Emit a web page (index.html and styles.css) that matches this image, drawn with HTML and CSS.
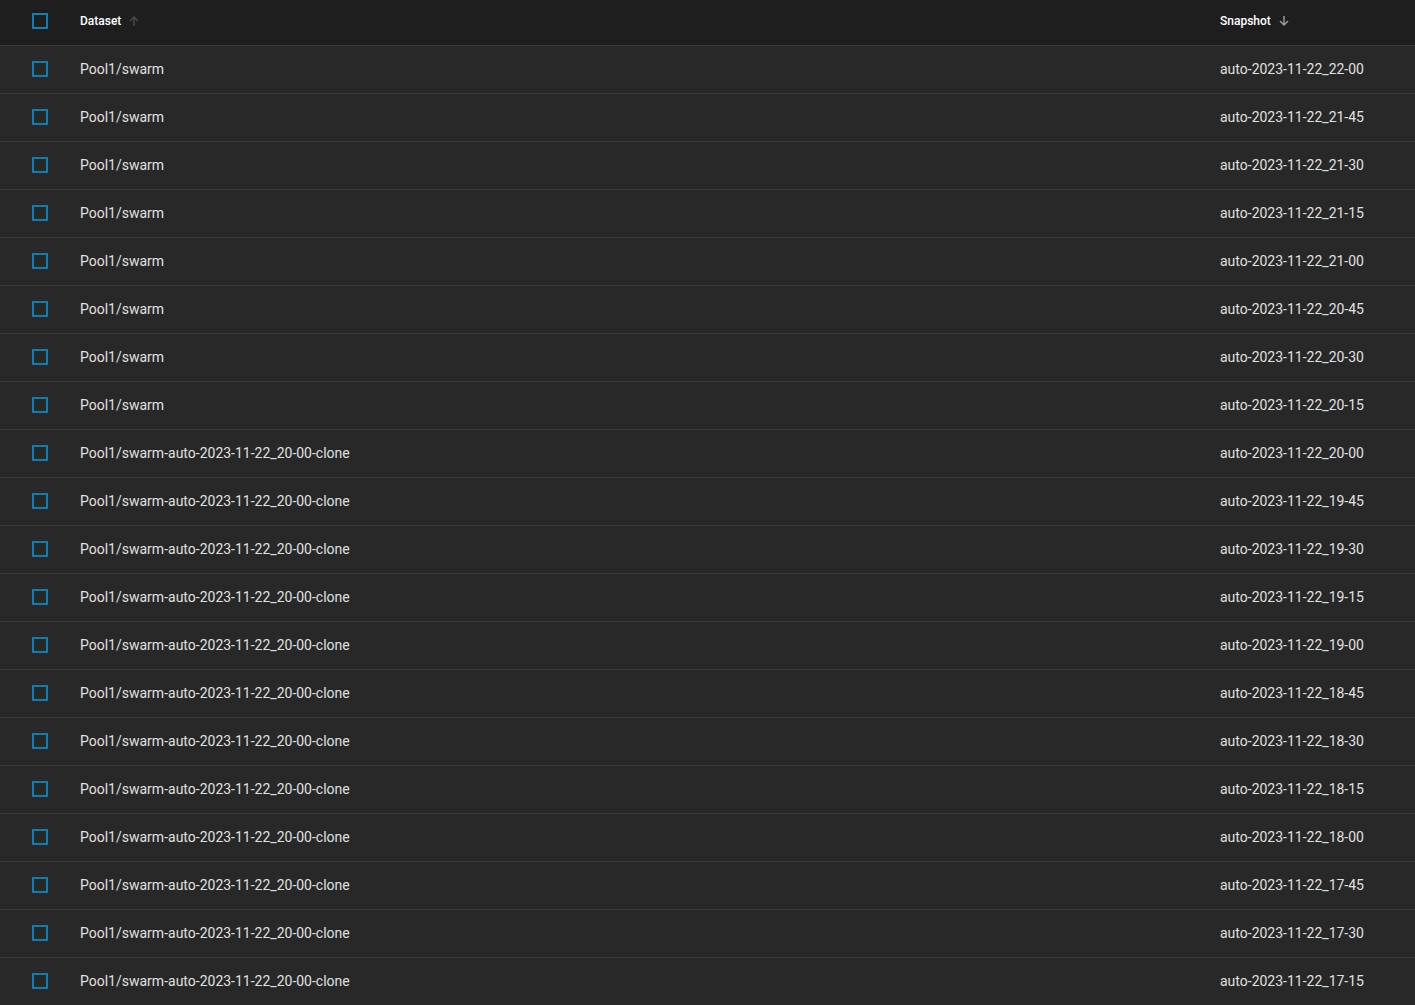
FILE: index.html
```html
<!DOCTYPE html>
<html lang="en">
  <head>
    <meta charset="UTF-8" />
    <title>Snapshots</title>
    <link rel="stylesheet" href="styles.css">
  </head>
  <body>
    <table class="snapshots">
      <thead>
        <tr>
          <th class="col-check"><span class="checkbox"></span></th>
          <th class="col-dataset">Dataset <svg class="sort dim" width="12" height="12" viewBox="0 0 12 12"><path d="M6 11V2M2 6l4-4 4 4" fill="none" stroke="currentColor" stroke-width="1.5"/></svg></th>
          <th class="col-snapshot">Snapshot <svg class="sort" width="12" height="12" viewBox="0 0 12 12"><path d="M6 1v9M2 6l4 4 4-4" fill="none" stroke="currentColor" stroke-width="1.5"/></svg></th>
        </tr>
      </thead>
      <tbody id="rows"></tbody>
    </table>
    <script>
      const rows = [
        ["Pool1/swarm", "22-00"],
        ["Pool1/swarm", "21-45"],
        ["Pool1/swarm", "21-30"],
        ["Pool1/swarm", "21-15"],
        ["Pool1/swarm", "21-00"],
        ["Pool1/swarm", "20-45"],
        ["Pool1/swarm", "20-30"],
        ["Pool1/swarm", "20-15"],
        ["Pool1/swarm-auto-2023-11-22_20-00-clone", "20-00"],
        ["Pool1/swarm-auto-2023-11-22_20-00-clone", "19-45"],
        ["Pool1/swarm-auto-2023-11-22_20-00-clone", "19-30"],
        ["Pool1/swarm-auto-2023-11-22_20-00-clone", "19-15"],
        ["Pool1/swarm-auto-2023-11-22_20-00-clone", "19-00"],
        ["Pool1/swarm-auto-2023-11-22_20-00-clone", "18-45"],
        ["Pool1/swarm-auto-2023-11-22_20-00-clone", "18-30"],
        ["Pool1/swarm-auto-2023-11-22_20-00-clone", "18-15"],
        ["Pool1/swarm-auto-2023-11-22_20-00-clone", "18-00"],
        ["Pool1/swarm-auto-2023-11-22_20-00-clone", "17-45"],
        ["Pool1/swarm-auto-2023-11-22_20-00-clone", "17-30"],
        ["Pool1/swarm-auto-2023-11-22_20-00-clone", "17-15"],
      ];
      const tbody = document.getElementById("rows");
      rows.forEach(([dataset, time]) => {
        const tr = document.createElement("tr");
        tr.innerHTML =
          '<td class="col-check"><span class="checkbox"></span></td>' +
          '<td class="col-dataset">' + dataset + "</td>" +
          '<td class="col-snapshot">auto-2023-11-22_' + time + "</td>";
        tbody.appendChild(tr);
      });
    </script>
  </body>
</html>
```

FILE: styles.css
```css
* {
  margin: 0;
  padding: 0;
  box-sizing: border-box;
}

body {
  font-family: Roboto, "Liberation Sans", sans-serif;
  background-color: #282828;
  color: #e0e0e0;
  overflow: hidden;
}

.snapshots {
  width: 100%;
  border-collapse: collapse;
  table-layout: fixed;
}

.snapshots th,
.snapshots td {
  text-align: left;
  vertical-align: middle;
  padding: 0;
  border-bottom: 1px solid #3a3a3a;
}

.snapshots thead tr {
  height: 45px;
  background-color: #1e1e1e;
}

.snapshots th {
  font-size: 12px;
  font-weight: 500;
  color: #ffffff;
  padding-bottom: 2px;
}

.snapshots tbody tr {
  height: 48px;
  background-color: #282828;
}

.snapshots td {
  font-size: 14px;
  color: #e0e0e0;
}

.col-check {
  width: 80px;
  padding-left: 32px !important;
}

.col-snapshot {
  width: 195px;
}

.checkbox {
  display: block;
  width: 16px;
  height: 16px;
  border: 2px solid #0e7db8;
}

.sort {
  vertical-align: -2px;
  margin-left: 4px;
  color: #9a9a9a;
}

.sort.dim {
  color: #4a4a4a;
}
```
